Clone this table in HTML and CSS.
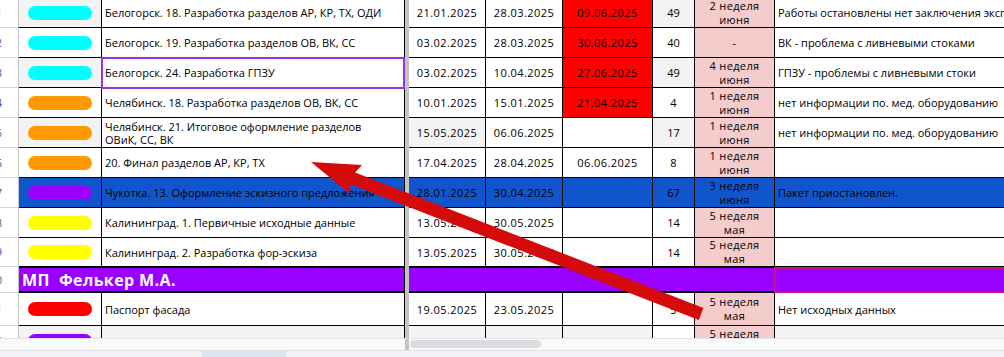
FILE: index.html
```html
<!DOCTYPE html>
<html lang="ru">
<head>
<meta charset="utf-8">
<title>Sheet</title>
<link rel="stylesheet" href="styles.css">
</head>
<body>
<div class="sheet">
  <div class="grid">
    <div class="row">
      <div class="rh">41</div>
      <div class="c tag g"><span class="pill cyan"></span></div>
      <div class="c">Белогорск. 18. Разработка разделов АР, КР, ТХ, ОДИ</div>
      <div class="dv"></div>
      <div class="c ctr dt">21.01.2025</div>
      <div class="c ctr dt">28.03.2025</div>
      <div class="c ctr dt red">09.06.2025</div>
      <div class="c ctr g">49</div>
      <div class="c ctr wk">2 неделя<br>июня</div>
      <div class="c">Работы остановлены нет заключения экспертизы</div>
    </div>
    <div class="row">
      <div class="rh">42</div>
      <div class="c tag"><span class="pill cyan"></span></div>
      <div class="c">Белогорск. 19. Разработка разделов ОВ, ВК, СС</div>
      <div class="dv"></div>
      <div class="c ctr dt">03.02.2025</div>
      <div class="c ctr dt">28.03.2025</div>
      <div class="c ctr dt red">30.06.2025</div>
      <div class="c ctr">40</div>
      <div class="c ctr wk">-</div>
      <div class="c">ВК - проблема с ливневыми стоками</div>
    </div>
    <div class="row">
      <div class="rh">43</div>
      <div class="c tag g"><span class="pill cyan"></span></div>
      <div class="c sel">Белогорск. 24. Разработка ГПЗУ</div>
      <div class="dv"></div>
      <div class="c ctr dt">03.02.2025</div>
      <div class="c ctr dt">10.04.2025</div>
      <div class="c ctr dt red">27.06.2025</div>
      <div class="c ctr g">49</div>
      <div class="c ctr wk">4 неделя<br>июня</div>
      <div class="c">ГПЗУ - проблемы с ливневыми стоки</div>
    </div>
    <div class="row">
      <div class="rh">44</div>
      <div class="c tag"><span class="pill orange"></span></div>
      <div class="c">Челябинск. 18. Разработка разделов ОВ, ВК, СС</div>
      <div class="dv"></div>
      <div class="c ctr dt">10.01.2025</div>
      <div class="c ctr dt">15.01.2025</div>
      <div class="c ctr dt red">21.04.2025</div>
      <div class="c ctr">4</div>
      <div class="c ctr wk">1 неделя<br>июня</div>
      <div class="c">нет информации по. мед. оборудованию</div>
    </div>
    <div class="row">
      <div class="rh">45</div>
      <div class="c tag g"><span class="pill orange"></span></div>
      <div class="c wrap">Челябинск. 21. Итоговое оформление разделов<br>ОВиК, СС, ВК</div>
      <div class="dv"></div>
      <div class="c ctr dt g">15.05.2025</div>
      <div class="c ctr dt">06.06.2025</div>
      <div class="c ctr"></div>
      <div class="c ctr g">17</div>
      <div class="c ctr wk">1 неделя<br>июня</div>
      <div class="c">нет информации по. мед. оборудованию</div>
    </div>
    <div class="row">
      <div class="rh">46</div>
      <div class="c tag"><span class="pill orange"></span></div>
      <div class="c">20. Финал разделов АР, КР, ТХ</div>
      <div class="dv"></div>
      <div class="c ctr dt">17.04.2025</div>
      <div class="c ctr dt">28.04.2025</div>
      <div class="c ctr dt">06.06.2025</div>
      <div class="c ctr">8</div>
      <div class="c ctr wk">1 неделя<br>июня</div>
      <div class="c"></div>
    </div>
    <div class="row blue">
      <div class="rh">47</div>
      <div class="c tag"><span class="pill purple"></span></div>
      <div class="c">Чукотка. 13. Оформление эскизного предложения</div>
      <div class="dv"></div>
      <div class="c ctr dt">28.01.2025</div>
      <div class="c ctr dt">30.04.2025</div>
      <div class="c ctr"></div>
      <div class="c ctr">67</div>
      <div class="c ctr wk">3 неделя<br>июня</div>
      <div class="c">Пакет приостановлен.</div>
    </div>
    <div class="row">
      <div class="rh">48</div>
      <div class="c tag"><span class="pill yellow"></span></div>
      <div class="c">Калининград. 1. Первичные исходные данные</div>
      <div class="dv"></div>
      <div class="c ctr dt">13.05.2025</div>
      <div class="c ctr dt">30.05.2025</div>
      <div class="c ctr"></div>
      <div class="c ctr">14</div>
      <div class="c ctr wk">5 неделя<br>мая</div>
      <div class="c"></div>
    </div>
    <div class="row short">
      <div class="rh">49</div>
      <div class="c tag"><span class="pill yellow"></span></div>
      <div class="c">Калининград. 2. Разработка фор-эскиза</div>
      <div class="dv"></div>
      <div class="c ctr dt">13.05.2025</div>
      <div class="c ctr dt">30.05.2025</div>
      <div class="c ctr"></div>
      <div class="c ctr">14</div>
      <div class="c ctr wk">5 неделя<br>мая</div>
      <div class="c"></div>
    </div>
    <div class="row head">
      <div class="rh">50</div>
      <div class="c hd title">МП&nbsp; Фелькер М.А.</div>
      <div class="dv"></div>
      <div class="c hd span5"></div>
      <div class="c hd note"></div>
    </div>
    <div class="row tall">
      <div class="rh">51</div>
      <div class="c tag"><span class="pill red-pill"></span></div>
      <div class="c">Паспорт фасада</div>
      <div class="dv"></div>
      <div class="c ctr dt">19.05.2025</div>
      <div class="c ctr dt">23.05.2025</div>
      <div class="c ctr"></div>
      <div class="c ctr">5</div>
      <div class="c ctr wk">5 неделя<br>мая</div>
      <div class="c">Нет исходных данных</div>
    </div>
    <div class="row">
      <div class="rh">52</div>
      <div class="c tag g"><span class="pill purple"></span></div>
      <div class="c g"></div>
      <div class="dv"></div>
      <div class="c ctr g"></div>
      <div class="c ctr g"></div>
      <div class="c ctr g"></div>
      <div class="c ctr"></div>
      <div class="c ctr wk">5 неделя<br>мая</div>
      <div class="c g"></div>
    </div>
  </div>
</div>
<div class="hscroll">
  <div class="hs-left"></div>
  <div class="hs-div"></div>
  <div class="hs-track"><div class="thumb"></div></div>
</div>
<div class="tabs">
  <div class="tab-active"></div>
</div>
<svg class="arrow" width="1004" height="357" viewBox="0 0 1004 357">
  <polygon points="311,162 362,165 355.1,172.5 703.4,308 698.8,320 350.5,184.2 350,194" fill="#d50a0a"/>
</svg>
</body>
</html>
```
FILE: styles.css
```css
html, body {
  margin: 0;
  padding: 0;
}

body {
  position: relative;
  width: 1004px;
  height: 357px;
  overflow: hidden;
  background: #fff;
  font-family: "Open Sans", "Liberation Sans", sans-serif;
  font-size: 11px;
  color: #000;
}

.sheet {
  height: 338px;
  overflow: hidden;
}

.grid {
  margin-top: -2px;
  width: 1075px;
}

.row {
  display: grid;
  grid-template-columns: 19px 83px 303px 4px 77px 77px 90px 42px 80px 300px;
  height: 30px;
}

.row.short { height: 29px; }
.row.tall { height: 33px; }
.row.head { height: 26px; }

.c {
  position: relative;
  box-sizing: border-box;
  border-right: 1px solid #000;
  border-bottom: 1px solid #000;
  display: flex;
  align-items: center;
  padding: 0 3px;
  overflow: hidden;
  white-space: nowrap;
  min-width: 0;
  background: #fff;
}

.ctr {
  justify-content: center;
  text-align: center;
}

.dt {
  letter-spacing: 0.45px;
}

.wrap {
  white-space: normal;
  line-height: 13px;
}

.rh {
  box-sizing: border-box;
  border-right: 1px solid #c4c4c4;
  border-bottom: 1px solid #d6d6d6;
  display: flex;
  align-items: center;
  justify-content: flex-end;
  padding-right: 16px;
  overflow: hidden;
  font-size: 10px;
  color: #3b4fa3;
  background: #fff;
}

.dv {
  background: #c3c3c3;
}

.tag {
  justify-content: center;
  padding: 0;
}

.pill {
  display: block;
  flex: none;
  width: 64px;
  height: 14px;
  border-radius: 7px;
}

.cyan { background: #00ffff; }
.orange { background: #ff9900; }
.purple { background: #9900ff; }
.yellow { background: #ffff00; }
.red-pill { background: #ff0000; }

.g { background: #f3f3f3; }
.red { background: #ff0000; }

.wk {
  background: #f4cccc;
  white-space: normal;
  line-height: 14px;
  letter-spacing: 0.35px;
}

.sel {
  overflow: visible;
  z-index: 2;
}

.sel::after {
  content: "";
  position: absolute;
  left: -1px;
  top: -1px;
  right: -1px;
  bottom: -2px;
  border: 2px solid #9334e6;
  pointer-events: none;
}

.row.blue .c {
  background: #1155cc;
}

.hd {
  background: #9900ff;
  border-top: 1px solid #000;
  border-bottom: 2px solid #000;
}

.title {
  grid-column: span 2;
  color: #fff;
  font-weight: 700;
  font-size: 16px;
  letter-spacing: 0.4px;
  padding-left: 3px;
}

.span5 {
  grid-column: span 5;
  border-right: none;
}

.note {
  overflow: visible;
}

.note::after {
  content: "";
  position: absolute;
  left: -1px;
  top: -1px;
  right: 0;
  bottom: -2px;
  border: 2px solid #c2167c;
  pointer-events: none;
}

.hscroll {
  display: flex;
  height: 12px;
  box-sizing: border-box;
  border-top: 1px solid #e2e2e2;
  background: #f8f9fa;
}

.hs-left {
  width: 405px;
}

.hs-div {
  width: 4px;
  background: #c3c3c3;
}

.hs-track {
  flex: 1;
  padding: 1px 0 0 1px;
}

.thumb {
  width: 131px;
  height: 8px;
  border-radius: 4px;
  background: #dadce0;
}

.tabs {
  height: 7px;
  box-sizing: border-box;
  border-top: 1px solid #dfe1e5;
  background: #f0f2f6;
  padding-left: 202px;
}

.tab-active {
  width: 84px;
  height: 6px;
  background: #dde5f1;
}

.arrow {
  position: absolute;
  left: 0;
  top: 0;
  pointer-events: none;
}
```
